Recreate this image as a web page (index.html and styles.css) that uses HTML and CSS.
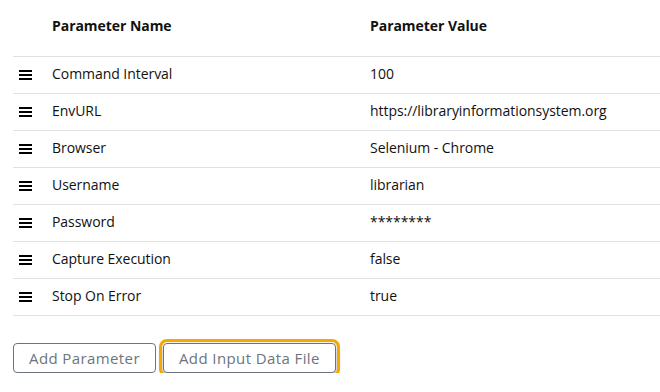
FILE: index.html
```html
<!DOCTYPE html>
<html lang="en">
<head>
    <meta charset="UTF-8">
    <title>Parameters</title>
    <link rel="stylesheet" href="styles.css">
</head>
<body>
    <div class="params">
        <div class="row head">
            <div class="handle"></div>
            <div class="cell">Parameter Name</div>
            <div class="cell">Parameter Value</div>
        </div>
        <div class="row">
            <div class="handle"><span class="bars"></span></div>
            <div class="cell">Command Interval</div>
            <div class="cell">100</div>
        </div>
        <div class="row">
            <div class="handle"><span class="bars"></span></div>
            <div class="cell">EnvURL</div>
            <div class="cell">https://libraryinformationsystem.org</div>
        </div>
        <div class="row">
            <div class="handle"><span class="bars"></span></div>
            <div class="cell">Browser</div>
            <div class="cell">Selenium - Chrome</div>
        </div>
        <div class="row">
            <div class="handle"><span class="bars"></span></div>
            <div class="cell">Username</div>
            <div class="cell">librarian</div>
        </div>
        <div class="row">
            <div class="handle"><span class="bars"></span></div>
            <div class="cell">Password</div>
            <div class="cell">********</div>
        </div>
        <div class="row">
            <div class="handle"><span class="bars"></span></div>
            <div class="cell">Capture Execution</div>
            <div class="cell">false</div>
        </div>
        <div class="row">
            <div class="handle"><span class="bars"></span></div>
            <div class="cell">Stop On Error</div>
            <div class="cell">true</div>
        </div>
    </div>
    <div class="actions">
        <button class="btn">Add Parameter</button>
        <button class="btn focused">Add Input Data File</button>
    </div>
</body>
</html>
```

FILE: styles.css
```css
body {
    margin: 0;
    padding-left: 13px;
    font-family: "Open Sans", "Noto Sans", sans-serif;
    font-size: 14px;
    color: #111;
    background-color: #fff;
}
.params {
    width: 100%;
}
.row {
    display: grid;
    grid-template-columns: 39px 318px 1fr;
    align-items: center;
    height: 36px;
    border-bottom: 1px solid #dee2e6;
}
.row.head {
    height: 56px;
    align-items: start;
    font-weight: bold;
}
.row.head .cell {
    padding-top: 16px;
}
.handle {
    padding-left: 6px;
    display: flex;
    align-items: center;
}
.bars {
    width: 13px;
    height: 10px;
    background: linear-gradient(#000 0 2px, transparent 2px 4px, #000 4px 6px, transparent 6px 8px, #000 8px 10px);
}
.cell {
    letter-spacing: -0.05px;
    margin-bottom: 3px;
}
.actions {
    display: flex;
    gap: 7px;
    margin-top: 27px;
}
.btn {
    font-family: "Open Sans", "Noto Sans", sans-serif;
    font-size: 15px;
    letter-spacing: 0.4px;
    color: #6c757d;
    background-color: #fff;
    border: 1px solid #6c757d;
    border-radius: 4px;
    height: 30px;
    padding: 0 15px;
}
.btn.focused {
    outline: 3px solid #f5a800;
    outline-offset: 1px;
    box-shadow: 0 3px 6px rgba(0, 0, 0, 0.35);
}
```
